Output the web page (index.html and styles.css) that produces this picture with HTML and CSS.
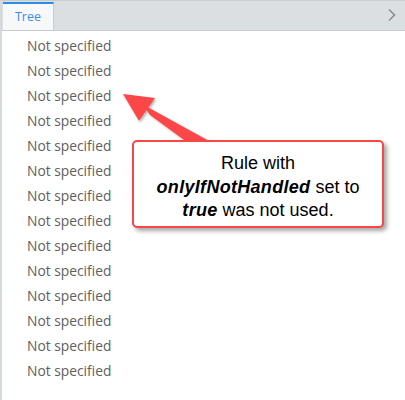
FILE: index.html
```html
<!DOCTYPE html>
<html>
<head>
<meta charset="utf-8">
<link rel="stylesheet" href="styles.css">
</head>
<body>
<div class="panel">
  <div class="tabbar">
    <div class="tab">Tree</div>
    <div class="spacer"></div>
    <svg class="chev" width="10" height="14" viewBox="0 0 10 14"><path d="M2 1.5 L7.5 7 L2 12.5" fill="none" stroke="#8a8e93" stroke-width="1.6"/></svg>
  </div>
  <ul class="list">
    <li>Not specified</li>
    <li>Not specified</li>
    <li>Not specified</li>
    <li>Not specified</li>
    <li>Not specified</li>
    <li>Not specified</li>
    <li>Not specified</li>
    <li>Not specified</li>
    <li>Not specified</li>
    <li>Not specified</li>
    <li>Not specified</li>
    <li>Not specified</li>
    <li>Not specified</li>
    <li>Not specified</li>
  </ul>
  <svg class="arrow" width="120" height="80" viewBox="0 0 120 80">
    <defs>
      <filter id="sh" x="-20%" y="-20%" width="140%" height="140%">
        <feDropShadow dx="1.5" dy="1.5" stdDeviation="1.2" flood-color="#000" flood-opacity="0.3"/>
      </filter>
    </defs>
    <g filter="url(#sh)" fill="#fb4646">
      <polygon points="3,5 35,9 19,32"/>
      <polygon points="22,15 30,26 90,70 100,58"/>
    </g>
  </svg>
  <div class="callout">Rule with<br><b><i>onlyIfNotHandled</i></b> set to<br><b><i>true</i></b> was not used.</div>
</div>
</body>
</html>
```
FILE: styles.css
```css
html, body { margin: 0; padding: 0; background: #fff; }
.panel {
  position: relative;
  width: 405px;
  height: 400px;
  box-sizing: border-box;
  border-left: 2px solid #d5d8dc;
  overflow: hidden;
}
.tabbar {
  display: flex;
  align-items: stretch;
  height: 31px;
  background: #dcdfe2;
  border-top: 1px solid #c9ccd0;
  border-bottom: 1px solid #c9ccd0;
  box-sizing: border-box;
}
.tab {
  width: 51px;
  margin-left: 1px;
  background: #f6f8fa;
  border-top: 2px solid #2d8de4;
  border-right: 1px solid #c9ccd0;
  margin-top: 1px;
  color: #3c8de0;
  font-family: "Open Sans", sans-serif;
  font-size: 12.5px;
  display: flex;
  align-items: center;
  justify-content: center;
  padding-bottom: 2px;
  box-sizing: border-box;
}
.spacer { flex: 1; }
.chev { align-self: center; margin-right: 8px; margin-top: -1px; }
.list {
  list-style: none;
  margin: 0;
  padding: 2px 0 0 25px;
}
.list li {
  height: 25px;
  line-height: 25px;
  font-family: "Open Sans", sans-serif;
  font-size: 13.8px;
  color: #606060;
}
.arrow {
  position: absolute;
  left: 118px;
  top: 89px;
}
.callout {
  position: absolute;
  left: 130px;
  top: 140px;
  width: 252px;
  height: 88px;
  box-sizing: border-box;
  border: 2px solid #fb4646;
  border-radius: 5px;
  background: #fff;
  box-shadow: 3px 3px 4px rgba(0,0,0,0.35);
  font-family: "Liberation Sans", Arial, sans-serif;
  font-size: 18px;
  line-height: 23.5px;
  color: #000;
  text-align: center;
  padding-top: 10px;
}
.callout b { letter-spacing: 0.3px; }
```
